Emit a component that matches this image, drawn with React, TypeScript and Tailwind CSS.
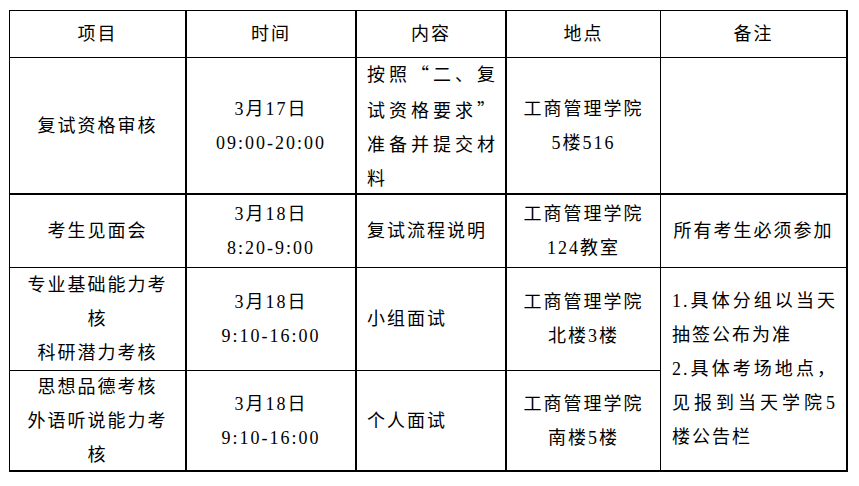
const cell = 'flex flex-col justify-center border-black';
const center = 'items-center text-center';

const Line = ({ children, justify = false }: { children: React.ReactNode; justify?: boolean }) => (
  <div className={justify ? 'w-full text-justify [text-align-last:justify]' : 'w-full text-left'}>{children}</div>
);

const App = () => {
  return (
    <div className="min-h-[486px] bg-white pl-[9px] pt-[10px] text-black">
      <div className="grid w-[839px] grid-cols-[177px_170px_150px_154px_187px] grid-rows-[47px_137px_73px_103px_101px] border-l border-t border-black font-['Liberation_Serif','Noto_Sans_CJK_SC',serif] text-[18px] leading-[34px] tracking-[2px]">
        {/* Header */}
        <div className={`${cell} ${center} border-r-2 border-b`}>项目</div>
        <div className={`${cell} ${center} border-r-2 border-b`}>时间</div>
        <div className={`${cell} ${center} border-r-2 border-b`}>内容</div>
        <div className={`${cell} ${center} border-r border-b`}>地点</div>
        <div className={`${cell} ${center} border-r-2 border-b`}>备注</div>

        {/* Row 1 */}
        <div className={`${cell} ${center} border-r-2 border-b-2`}>复试资格审核</div>
        <div className={`${cell} ${center} border-r-2 border-b-2`}>
          <div>3月17日</div>
          <div>09:00-20:00</div>
        </div>
        <div className={`${cell} border-r-2 border-b-2 pl-[10px] pr-[8px]`}>
          <Line justify>按照<span className="font-['Noto_Sans_CJK_SC',sans-serif]">“</span>二、复</Line>
          <Line justify>试资格要求<span className="font-['Noto_Sans_CJK_SC',sans-serif]">”</span></Line>
          <Line justify>准备并提交材</Line>
          <Line>料</Line>
        </div>
        <div className={`${cell} ${center} border-r border-b-2`}>
          <div>工商管理学院</div>
          <div>5楼516</div>
        </div>
        <div className={`${cell} border-r-2 border-b-2`}></div>

        {/* Row 2 */}
        <div className={`${cell} ${center} border-r-2 border-b`}>考生见面会</div>
        <div className={`${cell} ${center} border-r-2 border-b`}>
          <div>3月18日</div>
          <div>8:20-9:00</div>
        </div>
        <div className={`${cell} border-r-2 border-b pl-[10px]`}>复试流程说明</div>
        <div className={`${cell} ${center} border-r border-b`}>
          <div>工商管理学院</div>
          <div>124教室</div>
        </div>
        <div className={`${cell} ${center} border-r-2 border-b`}>所有考生必须参加</div>

        {/* Row 3 */}
        <div className={`${cell} ${center} border-r-2 border-b`}>
          <div>专业基础能力考</div>
          <div>核</div>
          <div>科研潜力考核</div>
        </div>
        <div className={`${cell} ${center} border-r-2 border-b`}>
          <div>3月18日</div>
          <div>9:10-16:00</div>
        </div>
        <div className={`${cell} border-r-2 border-b pl-[10px]`}>小组面试</div>
        <div className={`${cell} ${center} border-r border-b`}>
          <div>工商管理学院</div>
          <div>北楼3楼</div>
        </div>
        <div className={`${cell} row-span-2 border-r-2 border-b-2 pl-[11px] pr-[9px]`}>
          <Line justify>1.具体分组以当天</Line>
          <Line>抽签公布为准</Line>
          <Line justify>2.具体考场地点，</Line>
          <Line justify>见报到当天学院5</Line>
          <Line>楼公告栏</Line>
        </div>

        {/* Row 4 */}
        <div className={`${cell} ${center} border-r-2 border-b-2`}>
          <div>思想品德考核</div>
          <div>外语听说能力考</div>
          <div>核</div>
        </div>
        <div className={`${cell} ${center} border-r-2 border-b-2`}>
          <div>3月18日</div>
          <div>9:10-16:00</div>
        </div>
        <div className={`${cell} border-r-2 border-b-2 pl-[10px]`}>个人面试</div>
        <div className={`${cell} ${center} border-r border-b-2`}>
          <div>工商管理学院</div>
          <div>南楼5楼</div>
        </div>
      </div>
    </div>
  );
};

export default App;
